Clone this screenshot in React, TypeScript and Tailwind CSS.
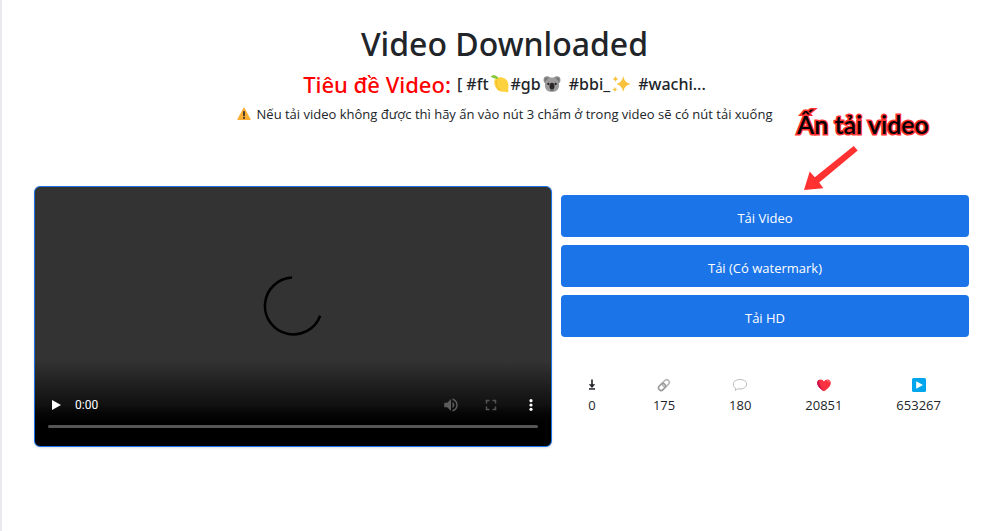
import type { ReactNode } from "react";

type Stat = {
  label: string;
  value: number;
  icon: ReactNode;
};

const downloads = ["Tải Video", "Tải (Có watermark)", "Tải HD"];

const stats: Stat[] = [
  { label: "Downloads", value: 0, icon: <DownloadIcon /> },
  { label: "Shares", value: 175, icon: <LinkIcon /> },
  { label: "Comments", value: 180, icon: <CommentIcon /> },
  { label: "Likes", value: 20851, icon: <HeartIcon /> },
  { label: "Plays", value: 653267, icon: <PlaysIcon /> },
];

function DownloadIcon() {
  return (
    <svg viewBox="0 0 14 14" className="size-3.5" aria-hidden="true">
      <path d="M6.200 1.500h1.600v4.800h2.400L7 10 3.800 6.300h2.400z" fill="#212529" />
      <path d="M4 10.200h6v1.500H4z" fill="#212529" />
    </svg>
  );
}

function LinkIcon() {
  return (
    <svg viewBox="0 0 14 14" className="size-3.5" fill="none" strokeWidth="1.6" aria-hidden="true">
      <g transform="rotate(-45 7 7)">
        <rect x="5.8" y="4.4" width="7.6" height="5.2" rx="2.6" stroke="#b9b9b9" />
        <rect x="0.4" y="4.4" width="7.6" height="5.2" rx="2.6" stroke="#999999" />
      </g>
    </svg>
  );
}

function CommentIcon() {
  return (
    <svg viewBox="0 0 16 14" className="h-3.5 w-4" fill="none" aria-hidden="true">
      <path
        d="M8 1.5c3.8 0 6.6 2 6.6 4.7S11.800 11 8 11c-.9 0-1.800-.1-2.500-.3-.6.900-1.300 1.500-2.200 1.800.3-.8.4-1.500.2-2.400C2.100 9.200 1.300 7.800 1.300 6.200 1.300 3.500 4.200 1.500 8 1.500z"
        stroke="#b0b0b0"
        strokeWidth="0.9"
      />
    </svg>
  );
}

function HeartIcon() {
  return (
    <svg viewBox="0 0 16 14" className="h-3.5 w-4" aria-hidden="true">
      <path d="M8 13.300C4.500 10.700 1.200 8.200 1.200 4.900 1.200 2.900 2.700 1.400 4.500 1.400 6 1.400 7.300 2.200 8 3.500c.7-1.300 2-2.100 3.500-2.100 1.800 0 3.300 1.500 3.300 3.500 0 3.300-3.300 5.800-6.800 8.400z" fill="#fa3140" />
      <path d="M8 13.300C4.500 10.700 1.200 8.200 1.200 4.900c0-1.500.8-2.700 2-3.200C2.700 5.500 5 10 8 13.300z" fill="#c8114d" />
      <path d="M10.800 2.600c1.300-.2 2.300.5 2.500 1.700" stroke="#ff8a8a" strokeWidth="0.9" fill="none" />
    </svg>
  );
}

function PlaysIcon() {
  return (
    <svg viewBox="0 0 14 14" className="size-3.5" aria-hidden="true">
      <rect width="14" height="14" rx="1.500" fill="#00a6ed" />
      <path d="M4.200 3.200v7.600L11 7z" fill="#ffffff" />
    </svg>
  );
}

function WarningIcon() {
  return (
    <svg viewBox="0 0 14 14" className="size-3.5 shrink-0" aria-hidden="true">
      <path d="M7 1.300 12.900 12.400H1.100z" fill="#fcae35" stroke="#fcae35" strokeWidth="1.400" strokeLinejoin="round" />
      <path d="M7 4.800v3.700" stroke="#2b2b2b" strokeWidth="1.700" strokeLinecap="round" />
      <circle cx="7" cy="11" r="1" fill="#2b2b2b" />
    </svg>
  );
}

function LemonIcon() {
  return (
    <svg viewBox="0 0 18 18" className="mx-px size-5 shrink-0" aria-hidden="true">
      <path d="M4.300 4.900C6.200 2.600 10.500 2 13.700 4.300c3.100 2.300 3.300 6.300 2.600 9.300.5.900.5 1.900-.2 2.500-.7.600-1.700.4-2.400-.1-3.200.3-6.600-.7-8.400-3.700-1.500-2.500-1.900-5.400-1-7.400z" fill="#fed23f" />
      <path d="M6 5.500c-1.200 2.700.2 7 2.800 9" stroke="#f5c02c" strokeWidth="1.200" fill="none" />
      <path d="M0.600 2.300C2.300.6 5 .5 6.800 2.700 7.500 3.500 7.400 4.500 6.900 5 5.900 3.900 3.200 4.400.6 2.300z" fill="#86c83a" />
    </svg>
  );
}

function KoalaIcon() {
  return (
    <svg viewBox="0 0 18 18" className="mx-px size-5 shrink-0" aria-hidden="true">
      <circle cx="4.600" cy="5.300" r="3.200" fill="#8d8d8d" />
      <circle cx="13.400" cy="5.300" r="3.200" fill="#8d8d8d" />
      <circle cx="4.300" cy="5.200" r="1.700" fill="#6f6f6f" />
      <circle cx="13.700" cy="5.200" r="1.700" fill="#6f6f6f" />
      <path d="M9 3.200c3.800 0 6.400 2.400 6.400 6.600S12.800 16 9 16 2.600 14 2.600 9.800 5.200 3.200 9 3.200z" fill="#9b9b9b" />
      <circle cx="5.700" cy="8.900" r="1" fill="#1c1c1c" />
      <circle cx="12.300" cy="8.900" r="1" fill="#1c1c1c" />
      <path d="M9 7.800c1.500 0 2.200 1.300 2.200 3.200S10.400 14 9 14s-2.200-1.100-2.200-3S7.500 7.800 9 7.800z" fill="#2a2328" />
      <path d="M7.300 14.600h3.400" stroke="#5c5c5c" strokeWidth="0.900" />
    </svg>
  );
}

function SparklesIcon() {
  return (
    <svg viewBox="0 0 18 18" className="mx-px size-5 shrink-0" fill="#f9c23c" aria-hidden="true">
      <path d="M11 1.800c.9 4 2.200 5.700 6.500 7.200-4.300 1.500-5.600 3.200-6.500 7.200-.9-4-2.200-5.700-5.900-7.200C8.800 7.500 10.100 5.800 11 1.800z" />
      <path d="M4 1.600c.3 1.700.8 2.300 2.700 2.900C4.800 5.100 4.300 5.700 4 7.400c-.3-1.700-.8-2.300-2.700-2.900C3.200 3.900 3.700 3.300 4 1.600zM3.500 11.400c.3 1.500.7 2 2.300 2.500-1.600.5-2 1-2.300 2.500-.3-1.500-.7-2-2.300-2.500 1.600-.5 2-1 2.300-2.500z" />
    </svg>
  );
}

function VideoPlayer() {
  return (
    <section
      aria-label="Video"
      className="relative flex h-[261px] flex-col justify-end overflow-hidden rounded-md border border-[#1b74e8] bg-linear-to-b from-[#333333] from-67% via-[#111111] via-84% to-black to-95% shadow-sm"
    >
      <svg
        viewBox="0 0 60 60"
        className="absolute top-1/2 left-1/2 size-[60px] -translate-x-1/2 -translate-y-[41px]"
        fill="none"
        aria-hidden="true"
      >
        <path d="M29 1.500A28.500 28.500 0 1 0 57.200 39.800" stroke="#000000" strokeWidth="2.500" />
      </svg>
      <div className="flex items-center pr-[11px] pl-3">
        <button type="button" aria-label="Play" className="flex size-[18px] items-center justify-center text-white">
          <svg viewBox="0 0 18 18" className="size-[18px]" fill="currentColor" aria-hidden="true">
            <path d="M5 4v10l9-5z" />
          </svg>
        </button>
        <span className="ml-2.5 font-[Roboto,sans-serif] text-xs text-white">0:00</span>
        <div className="ml-auto flex items-center gap-[22px]">
          <button type="button" aria-label="Mute" className="text-[#5c5c5c]">
            <svg viewBox="0 0 24 24" className="size-[18px]" fill="currentColor" aria-hidden="true">
              <path d="M3 9v6h4l5 5V4L7 9H3zm13.500 3c0-1.770-1.020-3.290-2.500-4.030v8.050c1.480-.73 2.500-2.250 2.500-4.020zM14 3.230v2.060c2.890.86 5 3.540 5 6.710s-2.110 5.850-5 6.710v2.060c4.010-.91 7-4.490 7-8.770s-2.990-7.860-7-8.770z" />
            </svg>
          </button>
          <button type="button" aria-label="Full screen" className="text-[#555555]">
            <svg viewBox="0 0 24 24" className="size-[18px]" fill="currentColor" aria-hidden="true">
              <path d="M7 14H5v5h5v-2H7v-3zm-2-4h2V7h3V5H5v5zm12 7h-3v2h5v-5h-2v3zM14 5v2h3v3h2V5h-5z" />
            </svg>
          </button>
          <button type="button" aria-label="More options" className="text-white">
            <svg viewBox="0 0 18 18" className="size-[18px]" fill="currentColor" aria-hidden="true">
              <circle cx="9" cy="4.700" r="1.600" />
              <circle cx="9" cy="9" r="1.600" />
              <circle cx="9" cy="13.300" r="1.600" />
            </svg>
          </button>
        </div>
      </div>
      <input
        type="range"
        aria-label="Seek"
        defaultValue={0}
        className="mx-[13px] mt-[11px] mb-[18px] h-[3px] appearance-none rounded-full bg-[#555555] [&::-webkit-slider-thumb]:size-0 [&::-webkit-slider-thumb]:appearance-none"
      />
    </section>
  );
}

function DownloadHint() {
  return (
    <div className="absolute -top-20 left-[236px]">
      <p className="font-[Lato,sans-serif] text-[25px] leading-9 font-semibold whitespace-nowrap text-black [paint-order:stroke_fill] [-webkit-text-stroke:3px_#ff3131]">
        Ấn tải video
      </p>
      <svg viewBox="0 0 54 44" className="mt-1 ml-[7px] h-11 w-[54px]" fill="#ff3131" aria-hidden="true">
        <path d="M49.700 0 53.700 4.500 15.200 36.400 19.300 42.300 0 44 5.700 25.500 10.800 31.300z" />
      </svg>
    </div>
  );
}

export default function App() {
  return (
    <main className="min-h-screen border-l-2 border-[#e9e9ee] bg-white font-['Open_Sans','Noto_Sans',sans-serif] text-[#212529]">
      <header className="flex flex-col items-center pt-5">
        <h1 className="font-['Noto_Sans',sans-serif] text-[32px] leading-12 font-medium">Video Downloaded</h1>
        <h2 className="flex items-center font-['Noto_Sans',sans-serif] text-base leading-8 font-medium">
          <span className="mr-1.5 text-[22px] text-[#ff0000]">Tiêu đề Video:</span>
          <span>[ #ft</span>
          <LemonIcon />
          <span>#gb</span>
          <KoalaIcon />
          <span className="ml-1.5">#bbi_</span>
          <SparklesIcon />
          <span className="ml-1.5">#wachi...</span>
        </h2>
        <p className="mt-1 flex items-center gap-1.5 text-[13px] leading-5">
          <WarningIcon />
          Nếu tải video không được thì hãy ấn vào nút 3 chấm ở trong video sẽ có nút tải xuống
        </p>
      </header>

      <div className="mt-[62px] grid grid-cols-[518fr_408fr] gap-[9px] pr-[38px] pl-8">
        <VideoPlayer />
        <div className="relative pt-[9px]">
          <DownloadHint />
          <div className="grid gap-2">
            {downloads.map((label) => (
              <button
                key={label}
                type="button"
                className="h-[42px] rounded bg-[#1b74e8] pt-1 text-[13px] leading-5 text-white"
              >
                {label}
              </button>
            ))}
          </div>
          <ul className="mt-[41px] flex justify-between pr-7 pl-6">
            {stats.map((stat) => (
              <li key={stat.label} aria-label={stat.label} className="flex flex-col items-center gap-[3px]">
                {stat.icon}
                <span className="text-[13px] leading-5">{stat.value}</span>
              </li>
            ))}
          </ul>
        </div>
      </div>
    </main>
  );
}
